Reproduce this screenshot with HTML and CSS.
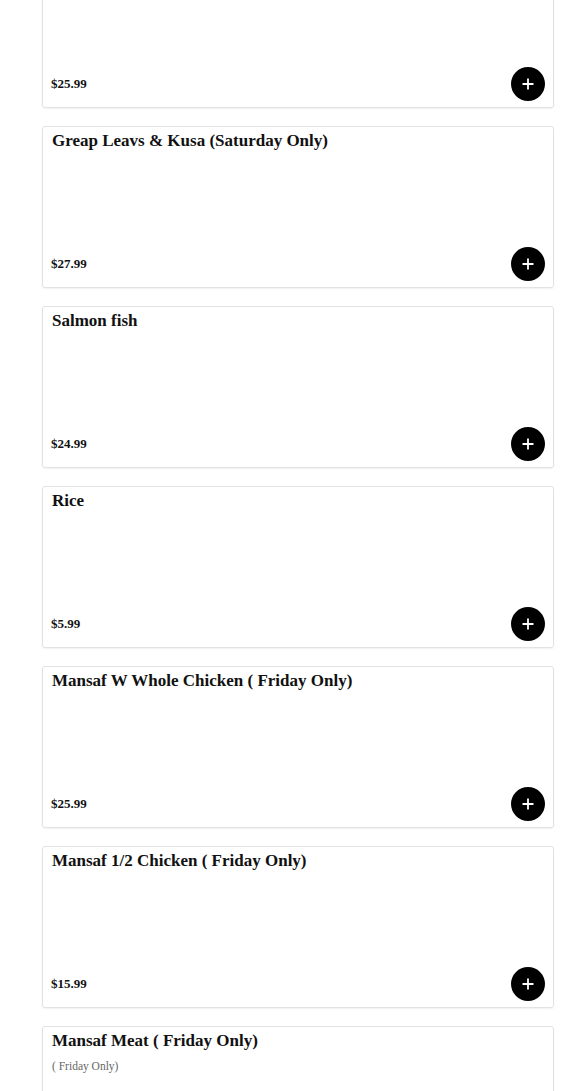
FILE: index.html
```html
<!DOCTYPE html>
<html lang="en">
  <head>
    <meta charset="UTF-8" />
    <meta name="viewport" content="width=device-width, initial-scale=1.0" />
    <title>Menu</title>
    <link rel="stylesheet" href="styles.css">
  </head>
  <body>
    <div class="menu">
      <div class="item">
        <h3 class="itemName"></h3>
        <div class="itemFoot">
          <span class="price">$25.99</span>
          <button class="addBtn"><svg viewBox="0 0 12 12"><path d="M6 0.5v11M0.5 6h11" /></svg></button>
        </div>
      </div>
      <div class="item">
        <h3 class="itemName">Greap Leavs &amp; Kusa (Saturday Only)</h3>
        <div class="itemFoot">
          <span class="price">$27.99</span>
          <button class="addBtn"><svg viewBox="0 0 12 12"><path d="M6 0.5v11M0.5 6h11" /></svg></button>
        </div>
      </div>
      <div class="item">
        <h3 class="itemName">Salmon fish</h3>
        <div class="itemFoot">
          <span class="price">$24.99</span>
          <button class="addBtn"><svg viewBox="0 0 12 12"><path d="M6 0.5v11M0.5 6h11" /></svg></button>
        </div>
      </div>
      <div class="item">
        <h3 class="itemName">Rice</h3>
        <div class="itemFoot">
          <span class="price">$5.99</span>
          <button class="addBtn"><svg viewBox="0 0 12 12"><path d="M6 0.5v11M0.5 6h11" /></svg></button>
        </div>
      </div>
      <div class="item">
        <h3 class="itemName">Mansaf W Whole Chicken ( Friday Only)</h3>
        <div class="itemFoot">
          <span class="price">$25.99</span>
          <button class="addBtn"><svg viewBox="0 0 12 12"><path d="M6 0.5v11M0.5 6h11" /></svg></button>
        </div>
      </div>
      <div class="item">
        <h3 class="itemName">Mansaf 1/2 Chicken ( Friday Only)</h3>
        <div class="itemFoot">
          <span class="price">$15.99</span>
          <button class="addBtn"><svg viewBox="0 0 12 12"><path d="M6 0.5v11M0.5 6h11" /></svg></button>
        </div>
      </div>
      <div class="item">
        <h3 class="itemName">Mansaf Meat ( Friday Only)</h3>
        <p class="itemDesc">( Friday Only)</p>
      </div>
    </div>
  </body>
</html>
```

FILE: styles.css
```css
body {
  margin: 0;
  background-color: white;
  font-family: "Liberation Serif", "Times New Roman", serif;
  color: #111;
  overflow: hidden;
}
.menu {
  display: flex;
  flex-direction: column;
  gap: 18px;
  margin-top: -54px;
  padding: 0 31px 0 42px;
}
.item {
  display: flex;
  flex-direction: column;
  height: 162px;
  box-sizing: border-box;
  border: 1px solid #e2e2e2;
  border-radius: 3px;
  box-shadow: 0 1px 2px rgba(0, 0, 0, 0.06);
}
.itemName {
  margin: 0;
  padding: 2px 9px 0;
  font-size: 17px;
  line-height: 23px;
  font-weight: bold;
}
.itemDesc {
  margin: 8px 0 0;
  padding: 0 9px;
  font-size: 11.5px;
  color: #666;
}
.itemFoot {
  display: flex;
  justify-content: space-between;
  align-items: center;
  margin-top: auto;
  padding: 0 8px 6px 8px;
}
.price {
  font-size: 13px;
  font-weight: bold;
}
.addBtn {
  display: flex;
  justify-content: center;
  align-items: center;
  width: 34px;
  height: 34px;
  border: none;
  border-radius: 50%;
  background-color: black;
  padding: 0;
  cursor: pointer;
}
.addBtn svg {
  width: 12px;
  height: 12px;
  fill: none;
  stroke: white;
  stroke-width: 1.8;
}
```
